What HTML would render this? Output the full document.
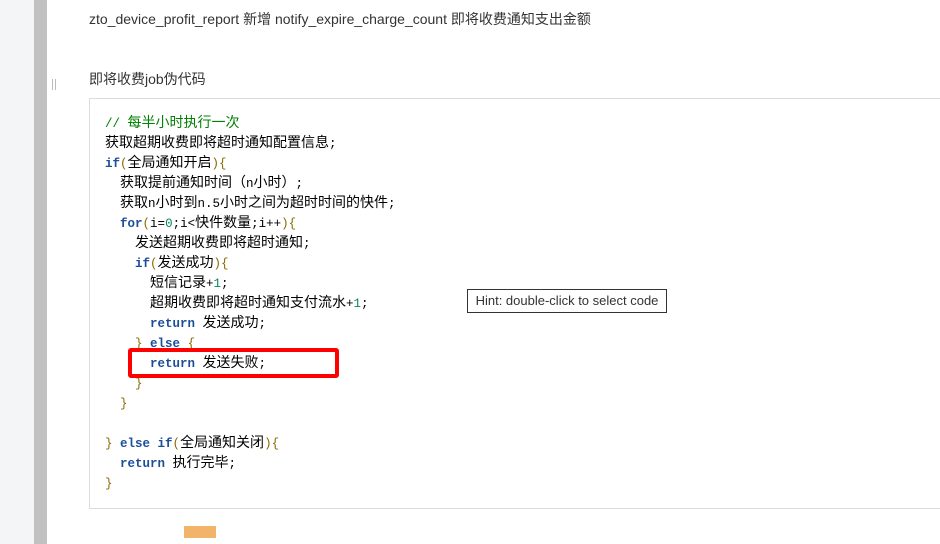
<!DOCTYPE html>
<html><head><meta charset="utf-8"><style>
body{margin:0;width:940px;height:544px;overflow:hidden;background:#fff;position:relative;font-family:"Liberation Sans","Noto Sans CJK SC",sans-serif;color:#333}
.l{position:absolute;left:0;top:0;width:34px;height:544px;background:#f4f5f7}
.g{position:absolute;left:34px;top:0;width:13px;height:544px;background:#c1c1c1}
.t{position:absolute;font-size:14px;color:#333;white-space:nowrap}
.box{position:absolute;left:89px;top:98px;width:860px;height:411px;border:1px solid #dcdcdc;box-sizing:border-box;background:#fff}
.code{position:absolute;left:105px;top:114px;font-family:"Liberation Mono","Noto Sans CJK SC",monospace;font-size:12.5px;line-height:20px;color:#000}
.code div{height:20px;white-space:pre;overflow:visible}
.code i{font-style:normal;font-family:"Noto Sans CJK SC",sans-serif;font-size:14px;line-height:0}
.k{color:#1c4e9a;font-weight:bold}.c{color:#008000}.n{color:#098658}.p{color:#8a6a00}
.red{position:absolute;left:128px;top:348px;width:211px;height:30px;border:4px solid #f00;border-radius:3px;box-sizing:border-box}
.hint{position:absolute;left:467px;top:289px;width:200px;height:24px;border:1px solid #333;box-sizing:border-box;background:#fff;font-size:13px;line-height:22px;text-align:center;color:#333}
</style></head><body>
<div class="l"></div><div class="g"></div>
<div style="position:absolute;left:52px;top:79px;height:11px;border-left:1px solid #bbb;border-right:1px solid #bbb;width:2px"></div>
<div class="t" style="left:89px;top:9px">zto_device_profit_report 新增 notify_expire_charge_count 即将收费通知支出金额</div>
<div class="t" style="left:89px;top:69px">即将收费job伪代码</div>
<div class="box"></div>
<div class="code">
<div><span class="c">// <i>每半小时执行一次</i></span></div>
<div><i>获取超期收费即将超时通知配置信息</i>;</div>
<div><span class="k">if</span><span class="p">(</span><i>全局通知开启</i><span class="p">){</span></div>
<div>  <i>获取提前通知时间（</i>n<i>小时）</i>;</div>
<div>  <i>获取</i>n<i>小时到</i>n.5<i>小时之间为超时时间的快件</i>;</div>
<div>  <span class="k">for</span><span class="p">(</span>i=<span class="n">0</span>;i&lt;<i>快件数量</i>;i++<span class="p">){</span></div>
<div>    <i>发送超期收费即将超时通知</i>;</div>
<div>    <span class="k">if</span><span class="p">(</span><i>发送成功</i><span class="p">){</span></div>
<div>      <i>短信记录</i>+<span class="n">1</span>;</div>
<div>      <i>超期收费即将超时通知支付流水</i>+<span class="n">1</span>;</div>
<div>      <span class="k">return</span> <i>发送成功</i>;</div>
<div>    <span class="p">}</span> <span class="k">else</span> <span class="p">{</span></div>
<div>      <span class="k">return</span> <i>发送失败</i>;</div>
<div>    <span class="p">}</span></div>
<div>  <span class="p">}</span></div>
<div> </div>
<div><span class="p">}</span> <span class="k">else if</span><span class="p">(</span><i>全局通知关闭</i><span class="p">){</span></div>
<div>  <span class="k">return</span> <i>执行完毕</i>;</div>
<div><span class="p">}</span></div>
</div>
<div class="red"></div>
<div class="hint">Hint: double-click to select code</div>
<div style="position:absolute;left:184px;top:526px;width:32px;height:12px;background:#f2b36a"></div>
</body></html>
